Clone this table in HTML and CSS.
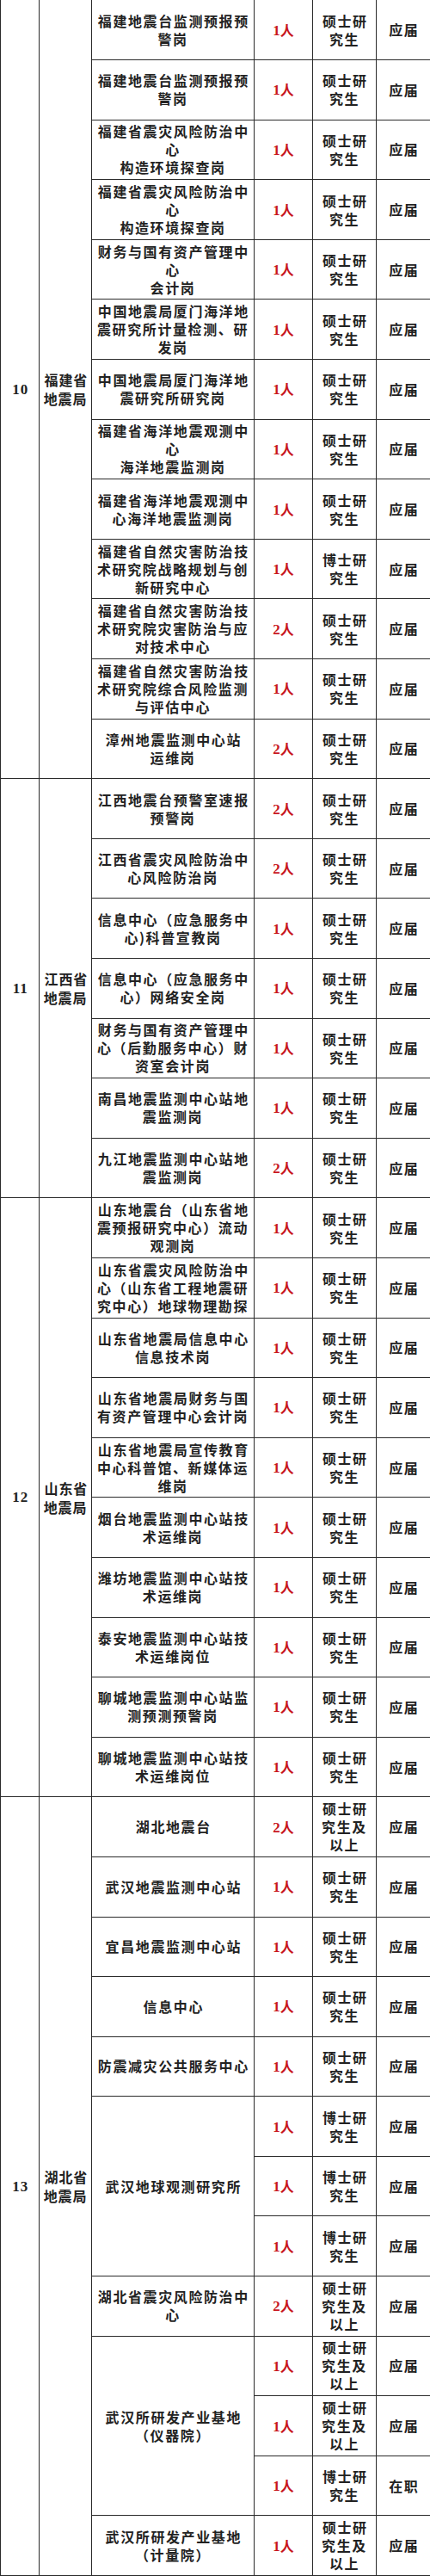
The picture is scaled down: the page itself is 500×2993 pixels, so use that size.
FILE: index.html
```html
<!DOCTYPE html>
<html lang="zh-CN">
<head>
<meta charset="utf-8">
<title>招聘岗位表</title>
<link rel="stylesheet" href="styles.css">
</head>
<body>
<table class="jobs">
<colgroup>
<col class="c-no"><col class="c-org"><col class="c-post"><col class="c-num"><col class="c-edu"><col class="c-type">
</colgroup>
<tbody>
<tr class="first"><td class="no" rowspan="13">10</td><td class="org" rowspan="13">福建省<br>地震局</td><td class="post">福建地震台监测预报预<br>警岗</td><td class="num">1<span>人</span></td><td class="edu">硕士研<br>究生</td><td class="type">应届</td></tr>
<tr><td class="post">福建地震台监测预报预<br>警岗</td><td class="num">1<span>人</span></td><td class="edu">硕士研<br>究生</td><td class="type">应届</td></tr>
<tr><td class="post">福建省震灾风险防治中<br>心<br>构造环境探查岗</td><td class="num">1<span>人</span></td><td class="edu">硕士研<br>究生</td><td class="type">应届</td></tr>
<tr><td class="post">福建省震灾风险防治中<br>心<br>构造环境探查岗</td><td class="num">1<span>人</span></td><td class="edu">硕士研<br>究生</td><td class="type">应届</td></tr>
<tr><td class="post">财务与国有资产管理中<br>心<br>会计岗</td><td class="num">1<span>人</span></td><td class="edu">硕士研<br>究生</td><td class="type">应届</td></tr>
<tr><td class="post">中国地震局厦门海洋地<br>震研究所计量检测、研<br>发岗</td><td class="num">1<span>人</span></td><td class="edu">硕士研<br>究生</td><td class="type">应届</td></tr>
<tr><td class="post">中国地震局厦门海洋地<br>震研究所研究岗</td><td class="num">1<span>人</span></td><td class="edu">硕士研<br>究生</td><td class="type">应届</td></tr>
<tr><td class="post">福建省海洋地震观测中<br>心<br>海洋地震监测岗</td><td class="num">1<span>人</span></td><td class="edu">硕士研<br>究生</td><td class="type">应届</td></tr>
<tr><td class="post">福建省海洋地震观测中<br>心海洋地震监测岗</td><td class="num">1<span>人</span></td><td class="edu">硕士研<br>究生</td><td class="type">应届</td></tr>
<tr><td class="post">福建省自然灾害防治技<br>术研究院战略规划与创<br>新研究中心</td><td class="num">1<span>人</span></td><td class="edu">博士研<br>究生</td><td class="type">应届</td></tr>
<tr><td class="post">福建省自然灾害防治技<br>术研究院灾害防治与应<br>对技术中心</td><td class="num">2<span>人</span></td><td class="edu">硕士研<br>究生</td><td class="type">应届</td></tr>
<tr><td class="post">福建省自然灾害防治技<br>术研究院综合风险监测<br>与评估中心</td><td class="num">1<span>人</span></td><td class="edu">硕士研<br>究生</td><td class="type">应届</td></tr>
<tr><td class="post">漳州地震监测中心站<br>运维岗</td><td class="num">2<span>人</span></td><td class="edu">硕士研<br>究生</td><td class="type">应届</td></tr>

<tr><td class="no" rowspan="7">11</td><td class="org" rowspan="7">江西省<br>地震局</td><td class="post">江西地震台预警室速报<br>预警岗</td><td class="num">2<span>人</span></td><td class="edu">硕士研<br>究生</td><td class="type">应届</td></tr>
<tr><td class="post">江西省震灾风险防治中<br>心风险防治岗</td><td class="num">2<span>人</span></td><td class="edu">硕士研<br>究生</td><td class="type">应届</td></tr>
<tr><td class="post">信息中心（应急服务中<br>心)科普宣教岗</td><td class="num">1<span>人</span></td><td class="edu">硕士研<br>究生</td><td class="type">应届</td></tr>
<tr><td class="post">信息中心（应急服务中<br>心）网络安全岗</td><td class="num">1<span>人</span></td><td class="edu">硕士研<br>究生</td><td class="type">应届</td></tr>
<tr><td class="post">财务与国有资产管理中<br>心（后勤服务中心）财<br>资室会计岗</td><td class="num">1<span>人</span></td><td class="edu">硕士研<br>究生</td><td class="type">应届</td></tr>
<tr><td class="post">南昌地震监测中心站地<br>震监测岗</td><td class="num">1<span>人</span></td><td class="edu">硕士研<br>究生</td><td class="type">应届</td></tr>
<tr><td class="post">九江地震监测中心站地<br>震监测岗</td><td class="num">2<span>人</span></td><td class="edu">硕士研<br>究生</td><td class="type">应届</td></tr>

<tr><td class="no" rowspan="10">12</td><td class="org" rowspan="10">山东省<br>地震局</td><td class="post">山东地震台（山东省地<br>震预报研究中心）流动<br>观测岗</td><td class="num">1<span>人</span></td><td class="edu">硕士研<br>究生</td><td class="type">应届</td></tr>
<tr><td class="post">山东省震灾风险防治中<br>心（山东省工程地震研<br>究中心）地球物理勘探</td><td class="num">1<span>人</span></td><td class="edu">硕士研<br>究生</td><td class="type">应届</td></tr>
<tr><td class="post">山东省地震局信息中心<br>信息技术岗</td><td class="num">1<span>人</span></td><td class="edu">硕士研<br>究生</td><td class="type">应届</td></tr>
<tr><td class="post">山东省地震局财务与国<br>有资产管理中心会计岗</td><td class="num">1<span>人</span></td><td class="edu">硕士研<br>究生</td><td class="type">应届</td></tr>
<tr><td class="post">山东省地震局宣传教育<br>中心科普馆、新媒体运<br>维岗</td><td class="num">1<span>人</span></td><td class="edu">硕士研<br>究生</td><td class="type">应届</td></tr>
<tr><td class="post">烟台地震监测中心站技<br>术运维岗</td><td class="num">1<span>人</span></td><td class="edu">硕士研<br>究生</td><td class="type">应届</td></tr>
<tr><td class="post">潍坊地震监测中心站技<br>术运维岗</td><td class="num">1<span>人</span></td><td class="edu">硕士研<br>究生</td><td class="type">应届</td></tr>
<tr><td class="post">泰安地震监测中心站技<br>术运维岗位</td><td class="num">1<span>人</span></td><td class="edu">硕士研<br>究生</td><td class="type">应届</td></tr>
<tr><td class="post">聊城地震监测中心站监<br>测预测预警岗</td><td class="num">1<span>人</span></td><td class="edu">硕士研<br>究生</td><td class="type">应届</td></tr>
<tr><td class="post">聊城地震监测中心站技<br>术运维岗位</td><td class="num">1<span>人</span></td><td class="edu">硕士研<br>究生</td><td class="type">应届</td></tr>

<tr><td class="no" rowspan="13">13</td><td class="org" rowspan="13">湖北省<br>地震局</td><td class="post">湖北地震台</td><td class="num">2<span>人</span></td><td class="edu">硕士研<br>究生及<br>以上</td><td class="type">应届</td></tr>
<tr><td class="post">武汉地震监测中心站</td><td class="num">1<span>人</span></td><td class="edu">硕士研<br>究生</td><td class="type">应届</td></tr>
<tr><td class="post">宜昌地震监测中心站</td><td class="num">1<span>人</span></td><td class="edu">硕士研<br>究生</td><td class="type">应届</td></tr>
<tr><td class="post">信息中心</td><td class="num">1<span>人</span></td><td class="edu">硕士研<br>究生</td><td class="type">应届</td></tr>
<tr><td class="post">防震减灾公共服务中心</td><td class="num">1<span>人</span></td><td class="edu">硕士研<br>究生</td><td class="type">应届</td></tr>
<tr><td class="post" rowspan="3">武汉地球观测研究所</td><td class="num">1<span>人</span></td><td class="edu">博士研<br>究生</td><td class="type">应届</td></tr>
<tr><td class="num">1<span>人</span></td><td class="edu">博士研<br>究生</td><td class="type">应届</td></tr>
<tr><td class="num">1<span>人</span></td><td class="edu">博士研<br>究生</td><td class="type">应届</td></tr>
<tr><td class="post">湖北省震灾风险防治中<br>心</td><td class="num">2<span>人</span></td><td class="edu">硕士研<br>究生及<br>以上</td><td class="type">应届</td></tr>
<tr><td class="post" rowspan="3">武汉所研发产业基地<br>（仪器院）</td><td class="num">1<span>人</span></td><td class="edu">硕士研<br>究生及<br>以上</td><td class="type">应届</td></tr>
<tr><td class="num">1<span>人</span></td><td class="edu">硕士研<br>究生及<br>以上</td><td class="type">应届</td></tr>
<tr><td class="num">1<span>人</span></td><td class="edu">博士研<br>究生</td><td class="type">在职</td></tr>
<tr><td class="post">武汉所研发产业基地<br>（计量院）</td><td class="num">1<span>人</span></td><td class="edu">硕士研<br>究生及<br>以上</td><td class="type">应届</td></tr>
</tbody>
</table>
</body>
</html>
```

FILE: styles.css
```css
html, body {
  margin: 0;
  padding: 0;
  background: #ffffff;
}

.jobs {
  width: 500px;
  border-collapse: collapse;
  table-layout: fixed;
  font-family: "Noto Sans CJK SC", "Noto Sans", sans-serif;
  font-weight: 700;
  font-size: 16px;
  line-height: 21px;
  color: #222222;
}

.c-no { width: 45px; }
.c-org { width: 61px; }
.c-post { width: 189px; }
.c-num { width: 68px; }
.c-edu { width: 74px; }
.c-type { width: 63px; }

.jobs tr {
  height: 69.6px;
}

.jobs td {
  border: 1px solid #2b2b2b;
  padding: 0;
  text-align: center;
  vertical-align: middle;
  white-space: nowrap;
  letter-spacing: 1.6px;
  text-indent: 1.6px;
  overflow: hidden;
}

.jobs tr.first td {
  border-top: none;
}

.jobs td.no {
  font-family: "Liberation Serif", serif;
  font-size: 17px;
  letter-spacing: 1px;
}

.jobs td.org {
  letter-spacing: 0.8px;
  line-height: 22px;
}

.jobs td.num {
  color: #c8161d;
  font-family: "Liberation Serif", "Noto Sans CJK SC", serif;
  font-size: 17px;
  letter-spacing: 0;
  text-indent: 0;
}

.jobs td.num span {
  font-family: "Noto Sans CJK SC", sans-serif;
  font-size: 16px;
}
```
